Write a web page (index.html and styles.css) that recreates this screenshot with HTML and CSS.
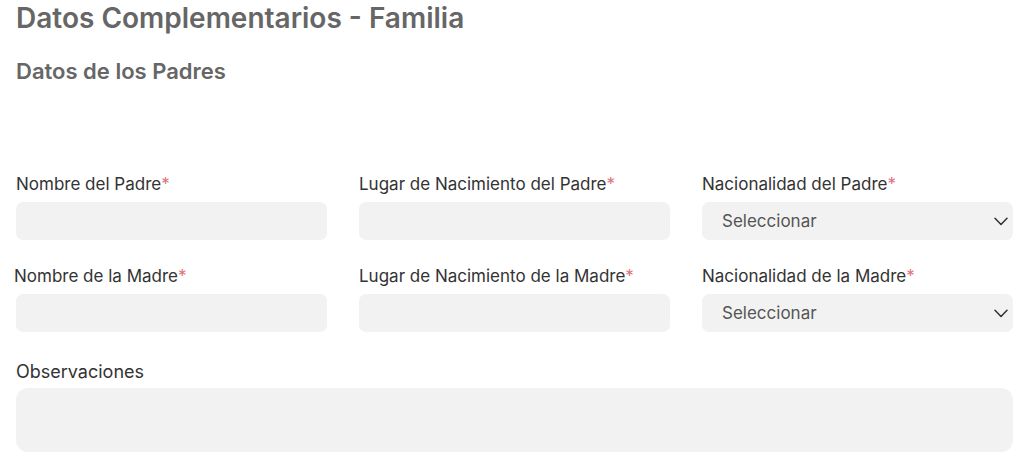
FILE: index.html
```html
<!DOCTYPE html>
<html lang="es">
<head>
<meta charset="utf-8">
<title>Datos Complementarios - Familia</title>
<link rel="stylesheet" href="styles.css">
</head>
<body>
<main class="page">
  <h1 class="title">Datos Complementarios - Familia</h1>
  <h2 class="subtitle">Datos de los Padres</h2>
  <div class="grid">
    <div class="field">
      <label class="label">Nombre del Padre<span class="req">*</span></label>
      <input class="input" type="text">
    </div>
    <div class="field">
      <label class="label">Lugar de Nacimiento del Padre<span class="req">*</span></label>
      <input class="input" type="text">
    </div>
    <div class="field">
      <label class="label">Nacionalidad del Padre<span class="req">*</span></label>
      <div class="select-wrap">
        <select class="select"><option>Seleccionar</option></select>
        <svg class="chev" width="14" height="9" viewBox="0 0 14 9"><path d="M1 1.2 L7 7.5 L13 1.2" fill="none" stroke="#333" stroke-width="1.5" stroke-linecap="round" stroke-linejoin="round"/></svg>
      </div>
    </div>
    <div class="field">
      <label class="label shift">Nombre de la Madre<span class="req">*</span></label>
      <input class="input" type="text">
    </div>
    <div class="field">
      <label class="label">Lugar de Nacimiento de la Madre<span class="req">*</span></label>
      <input class="input" type="text">
    </div>
    <div class="field">
      <label class="label">Nacionalidad de la Madre<span class="req">*</span></label>
      <div class="select-wrap">
        <select class="select"><option>Seleccionar</option></select>
        <svg class="chev" width="14" height="9" viewBox="0 0 14 9"><path d="M1 1.2 L7 7.5 L13 1.2" fill="none" stroke="#333" stroke-width="1.5" stroke-linecap="round" stroke-linejoin="round"/></svg>
      </div>
    </div>
  </div>
  <div class="obs">
    <label class="label obs-label">Observaciones</label>
    <textarea class="textarea"></textarea>
  </div>
</main>
</body>
</html>
```

FILE: styles.css
```css
* { box-sizing: border-box; }
body {
  margin: 0;
  background: #fff;
  font-family: Inter, Roboto, "Noto Sans", sans-serif;
  color: #333;
}
.page {
  padding: 0 11px 0 16px;
  display: flex;
  flex-direction: column;
}
.title {
  margin: 2px 0 0;
  font-size: 28px;
  line-height: 32px;
  font-weight: 600;
  color: #666;
}
.subtitle {
  margin: 24px 0 0;
  font-size: 22px;
  line-height: 26px;
  font-weight: 600;
  color: #666;
}
.grid {
  margin-top: 90px;
  display: grid;
  grid-template-columns: repeat(3, 311px);
  column-gap: 32px;
  row-gap: 26px;
}
.field {
  display: flex;
  flex-direction: column;
}
.label {
  display: block;
  font-size: 17px;
  line-height: 20px;
  color: #333;
  margin-bottom: 8px;
}
.label.shift { margin-left: -2px; }
.req { color: #e0707a; }
.input {
  height: 38px;
  border: none;
  border-radius: 7px;
  background: #f2f2f2;
  outline: none;
}
.select-wrap {
  position: relative;
}
.select {
  width: 100%;
  height: 38px;
  border: none;
  border-radius: 7px;
  background: #f2f2f2;
  -webkit-appearance: none;
  appearance: none;
  padding: 0 0 0 20px;
  font-family: Inter, Roboto, "Noto Sans", sans-serif;
  font-size: 17px;
  color: #555;
  outline: none;
}
.chev {
  position: absolute;
  right: 5px;
  top: 15px;
  pointer-events: none;
}
.obs {
  margin-top: 30px;
  display: flex;
  flex-direction: column;
}
.obs-label {
  font-size: 18px;
  margin-bottom: 6px;
}
.textarea {
  height: 64px;
  border: none;
  border-radius: 12px;
  background: #f2f2f2;
  resize: none;
  outline: none;
}
```
